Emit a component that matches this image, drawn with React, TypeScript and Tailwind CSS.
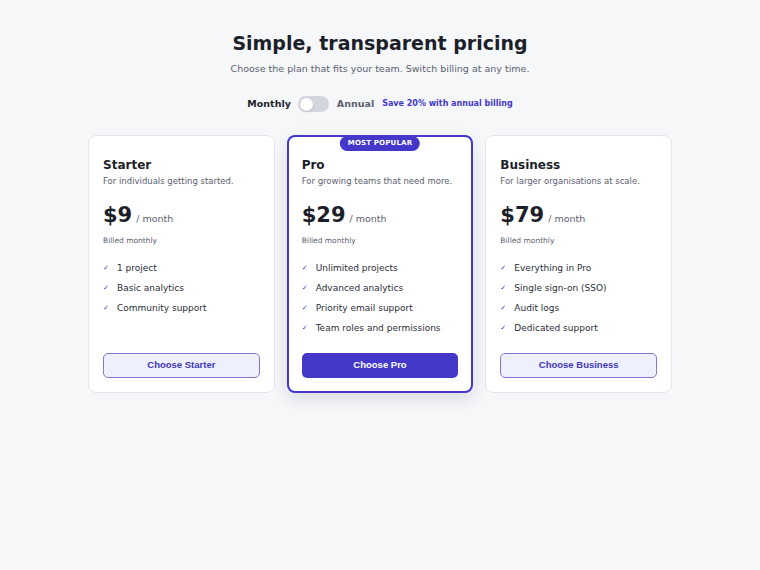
import { useState } from "react";

type plan = {
  name: string;
  desc: string;
  price: string;
  features: string[];
  cta: string;
  popular?: boolean;
};

const plans: plan[] = [
  {
    name: "Starter",
    desc: "For individuals getting started.",
    price: "$9",
    features: ["1 project", "Basic analytics", "Community support"],
    cta: "Choose Starter",
  },
  {
    name: "Pro",
    desc: "For growing teams that need more.",
    price: "$29",
    features: [
      "Unlimited projects",
      "Advanced analytics",
      "Priority email support",
      "Team roles and permissions",
    ],
    cta: "Choose Pro",
    popular: true,
  },
  {
    name: "Business",
    desc: "For larger organisations at scale.",
    price: "$79",
    features: [
      "Everything in Pro",
      "Single sign-on (SSO)",
      "Audit logs",
      "Dedicated support",
    ],
    cta: "Choose Business",
  },
];

const App = () => {
  const [annual, setAnnual] = useState(false);

  return (
    <div className="min-h-[570px] w-full bg-[#f6f7f9] font-['DejaVu_Sans',sans-serif] text-[#1c1f2a]">
      <div className="flex flex-col items-center pt-[29px]">
        <h1 className="text-[19px] font-bold leading-7">Simple, transparent pricing</h1>
        <p className="mt-[5px] text-[9.5px] leading-[13px] text-[#5b6170]">
          Choose the plan that fits your team. Switch billing at any time.
        </p>
        <div className="mt-[21px] flex h-4 items-center">
          <span className="text-[9.5px] font-bold text-[#1c1f2a]">Monthly</span>
          <button
            onClick={() => setAnnual(!annual)}
            className={`ml-[7px] flex h-4 w-[31px] items-center rounded-full p-[2px] ${
              annual ? "bg-[#4338ca] justify-end" : "bg-[#d3d6dc]"
            }`}
          >
            <span className="h-[13px] w-[13px] rounded-full bg-white shadow" />
          </button>
          <span className="ml-[8px] text-[9.5px] font-bold text-[#5b6170]">Annual</span>
          <span className="ml-[8px] text-[8px] font-bold text-[#4338ca]">
            Save 20% with annual billing
          </span>
        </div>

        <div className="mt-[23px] grid w-[584px] grid-cols-3 gap-3">
          {plans.map((p) => (
            <div
              key={p.name}
              className={`relative flex h-[258px] flex-col rounded-lg bg-white ${
                p.popular
                  ? "border-2 border-[#4338ca] px-[13px] pt-[20px] pb-[13px] shadow-[0_6px_16px_rgba(30,27,75,0.12)]"
                  : "border border-[#e3e5ea] px-[14px] pt-[21px] pb-[14px]"
              }`}
            >
              {p.popular && (
                <span className="absolute -top-[1px] left-1/2 -translate-x-1/2 rounded-full bg-[#4338ca] px-[8px] py-[3px] text-[7px] leading-[9px] font-bold tracking-wide text-white">
                  MOST POPULAR
                </span>
              )}
              <h2 className="text-[12px] font-bold leading-4">{p.name}</h2>
              <p className="mt-[2px] text-[8.5px] leading-[12px] text-[#5b6170]">{p.desc}</p>
              <div className="mt-[14px] flex h-7 items-baseline">
                <span className="text-[21px] font-bold leading-7">{p.price}</span>
                <span className="ml-[4px] text-[9.5px] text-[#5b6170]">/ month</span>
              </div>
              <p className="mt-[7px] text-[7.5px] leading-[10px] text-[#5b6170]">Billed monthly</p>
              <ul className="mt-[16px] flex flex-col gap-[7px]">
                {p.features.map((f) => (
                  <li key={f} className="flex items-center text-[9px] leading-[13px] text-[#2a2e3a]">
                    <span className="w-[14px] text-[7px] text-[#4338ca]">✓</span>
                    {f}
                  </li>
                ))}
              </ul>
              <button
                className={`mt-auto h-[25px] w-full rounded-[5px] font-['Liberation_Sans',sans-serif] text-[9.5px] font-bold ${
                  p.popular
                    ? "bg-[#4338ca] text-white"
                    : "border border-[#7f79d4] bg-[#eef0fd] text-[#3f37b8]"
                }`}
              >
                {p.cta}
              </button>
            </div>
          ))}
        </div>
      </div>
    </div>
  );
};

export default App;
